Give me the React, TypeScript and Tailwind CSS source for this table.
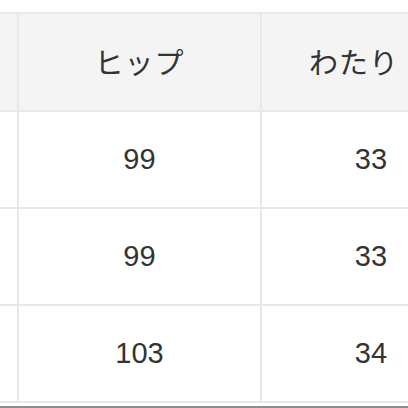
const rows = [
  ["99", "33"],
  ["99", "33"],
  ["103", "34"],
];

export default function App() {
  return (
    <div
      className="w-[408px] h-[408px] overflow-hidden bg-white pt-[12px] text-[#333333]"
      style={{ fontFamily: '"Liberation Sans", "Noto Sans CJK JP", sans-serif' }}
    >
      <div className="w-[480px]">
        {/* header */}
        <div className="flex h-[98px] border-t-2 border-[#e8e8e8] bg-[#f4f4f4]">
          <div className="w-[19px] border-r-2 border-[#e8e8e8]" />
          <div className="w-[243px] border-r-2 border-[#e8e8e8] flex items-center justify-center text-[29px] tracking-[1px] font-['Noto_Sans_CJK_JP']">
            ヒップ
          </div>
          <div className="w-[218px] flex items-center justify-center pr-[34px] text-[29px] tracking-[1px] font-['Noto_Sans_CJK_JP']">
            わたり
          </div>
        </div>
        {rows.map((r, i) => (
          <div key={i} className="flex h-[97px] border-t-2 border-[#e8e8e8] bg-white">
            <div className="w-[19px] border-r-2 border-[#e8e8e8]" />
            <div className="w-[243px] border-r-2 border-[#e8e8e8] flex items-center justify-center text-[29px]">
              {r[0]}
            </div>
            <div className="w-[218px] flex items-center justify-center text-[29px]">
              {r[1]}
            </div>
          </div>
        ))}
        <div className="h-[5px] border-t-2 border-[#e8e8e8]" />
        <div className="h-[6px] bg-[#8c8c8c]" />
      </div>
    </div>
  );
}
